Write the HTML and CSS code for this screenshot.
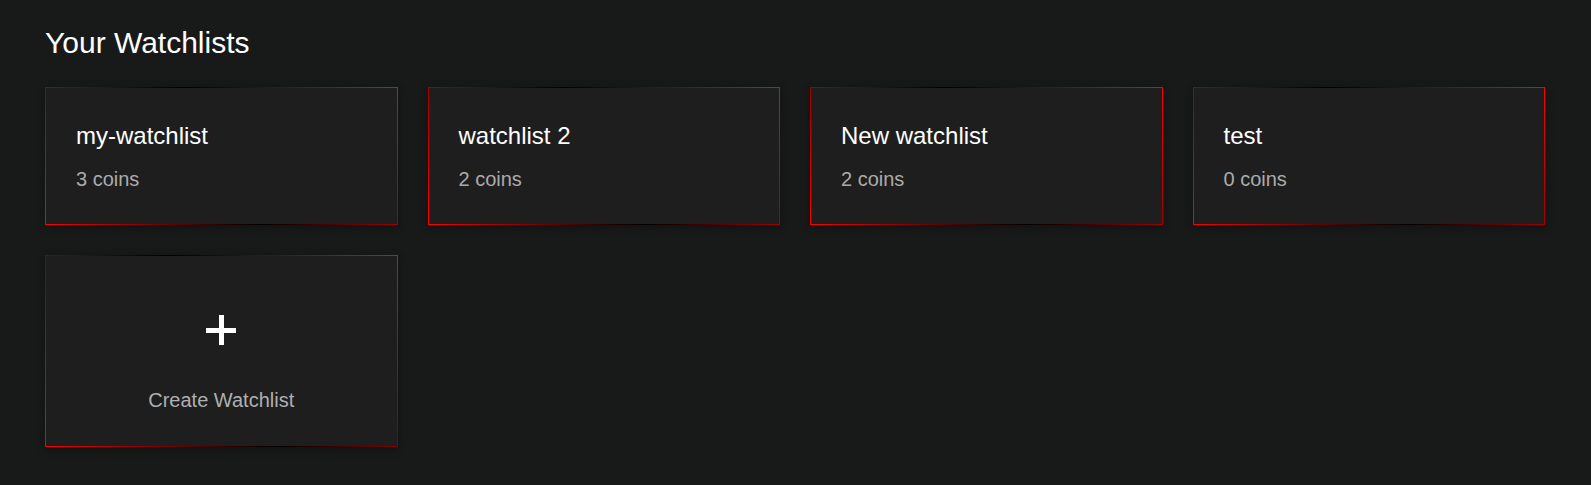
FILE: index.html
```html
<!DOCTYPE html>
<html lang="en">
<head>
<meta charset="utf-8">
<title>Your Watchlists</title>
<link rel="stylesheet" href="styles.css">
</head>
<body>
<main class="page">
  <h2 class="page-title">Your Watchlists</h2>
  <div class="grid">
    <div class="card">
      <h3 class="card-title">my-watchlist</h3>
      <p class="card-meta">3 coins</p>
    </div>
    <div class="card">
      <h3 class="card-title">watchlist 2</h3>
      <p class="card-meta">2 coins</p>
    </div>
    <div class="card">
      <h3 class="card-title">New watchlist</h3>
      <p class="card-meta">2 coins</p>
    </div>
    <div class="card">
      <h3 class="card-title">test</h3>
      <p class="card-meta">0 coins</p>
    </div>
    <div class="card card-create">
      <svg class="plus" width="30" height="30" viewBox="0 0 30 30" aria-hidden="true">
        <rect x="0" y="13" width="30" height="5" fill="#fff"/>
        <rect x="13" y="0" width="5" height="30" fill="#fff"/>
      </svg>
      <span class="create-label">Create Watchlist</span>
    </div>
  </div>
</main>
</body>
</html>
```

FILE: styles.css
```css
html, body {
  margin: 0;
  padding: 0;
  background: #181a19;
}

body {
  font-family: "Liberation Sans", Arial, sans-serif;
  color: #fff;
}

.page {
  padding: 26px 46px 30px 45px;
}

.page-title {
  margin: 0 0 26.5px;
  font-size: 30px;
  font-weight: 400;
  line-height: 34.5px;
  color: #fff;
}

.grid {
  display: grid;
  grid-template-columns: repeat(4, 1fr);
  gap: 30px;
}

.card {
  background: #1e1e1e;
  border: 1px solid transparent;
  border-image: linear-gradient(60deg, #ff0000 0%, #000000 50%, #ff0000 100%) 1;
  box-shadow: 0 2px 8px rgba(0, 0, 0, 0.35);
  padding: 30px;
}

.card-title {
  margin: 0;
  font-size: 24px;
  font-weight: 400;
  line-height: 36px;
  color: #fff;
}

.card-meta {
  margin: 10px 0 0;
  font-size: 20px;
  line-height: 30px;
  color: #ababab;
}

.card-create {
  display: flex;
  flex-direction: column;
  align-items: center;
  padding: 59px 30px 31px;
}

.plus {
  display: block;
}

.create-label {
  margin-top: 40px;
  font-size: 20px;
  line-height: 30px;
  color: #b0b0b0;
}
```
